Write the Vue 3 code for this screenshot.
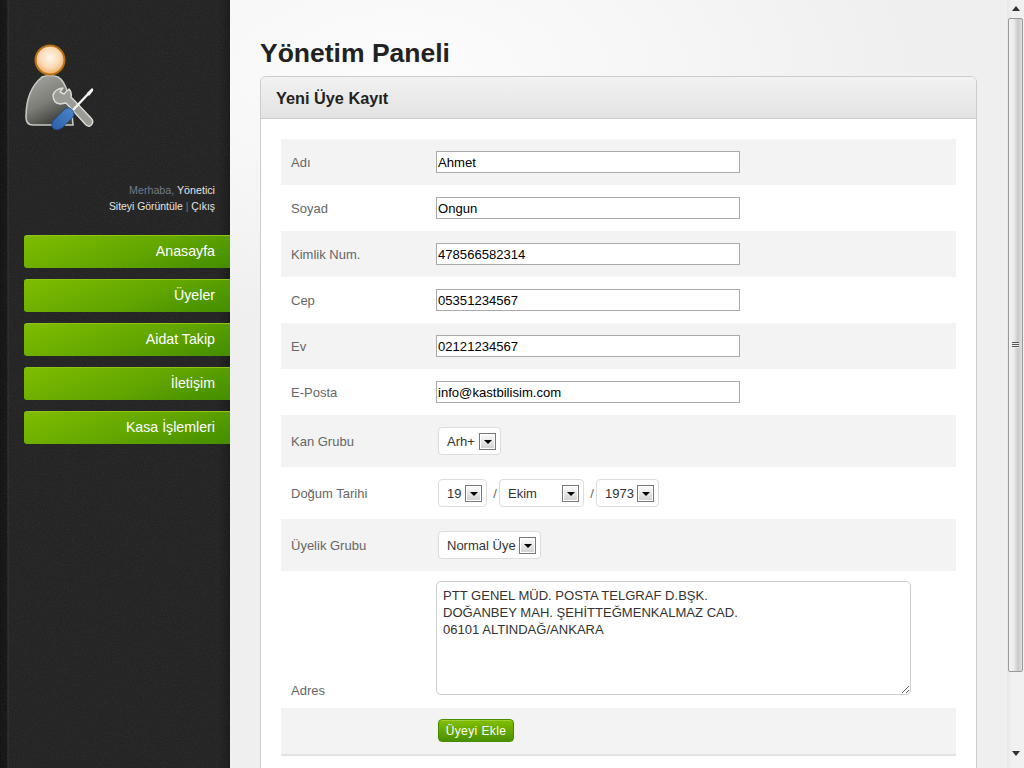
<script setup>
const textRows = [
  { label: 'Adı', value: 'Ahmet' },
  { label: 'Soyad', value: 'Ongun' },
  { label: 'Kimlik Num.', value: '478566582314' },
  { label: 'Cep', value: '05351234567' },
  { label: 'Ev', value: '02121234567' },
  { label: 'E-Posta', value: 'info@kastbilisim.com' },
]
const menu = ['Anasayfa', 'Üyeler', 'Aidat Takip', 'İletişim', 'Kasa İşlemleri']
const address = 'PTT GENEL MÜD. POSTA TELGRAF D.BŞK.\nDOĞANBEY MAH. ŞEHİTTEĞMENKALMAZ CAD.\n06101 ALTINDAĞ/ANKARA'
</script>

<template>
  <div class="page">
    <aside class="sidebar">
      <svg class="noise" width="230" height="768" aria-hidden="true">
        <filter id="grain"><feTurbulence type="fractalNoise" baseFrequency="0.9" numOctaves="2" seed="4" /><feColorMatrix type="matrix" values="0 0 0 0 1  0 0 0 0 1  0 0 0 0 1  0.5 0.5 0 0 -0.42" /></filter>
        <rect width="230" height="768" filter="url(#grain)" />
      </svg>
      <div class="side-inner">
        <svg class="avatar" width="75" height="90" viewBox="22 43 75 90">
          <defs>
            <radialGradient id="head" cx="50%" cy="42%" r="55%">
              <stop offset="0" stop-color="#fff6ec" /><stop offset=".6" stop-color="#fbdcb8" /><stop offset="1" stop-color="#f0b070" />
            </radialGradient>
            <linearGradient id="body" x1="0" y1="0" x2=".5" y2="1">
              <stop offset="0" stop-color="#aaaaa5" /><stop offset=".6" stop-color="#7c7d75" /><stop offset="1" stop-color="#3e403c" />
            </linearGradient>
            <linearGradient id="blue" x1="0" y1="1" x2="1" y2="0">
              <stop offset="0" stop-color="#2a5fa8" /><stop offset="1" stop-color="#4c86c9" />
            </linearGradient>
          </defs>
          <path d="M42 77 Q50 74 58 77 Q70 84 73 125 H33 Q26 125 26 117 Q26 90 42 77 Z" fill="url(#body)" stroke="#c6c8c2" stroke-width="1.6" />
          <circle cx="50" cy="60" r="14.5" fill="url(#head)" stroke="#b56f10" stroke-width="2" />
          <path d="M63 88 Q55 89 53 95 Q53 103 60 104 L66 103 L86 125 Q90 128 92 124 Q94 121 91 118 L71 97 Q72 92 69 89 L64 94 L60 92 Z" fill="#9a9c96" stroke="#dcdcd8" stroke-width="1.4" stroke-linejoin="round" />
          <path d="M89 93 L73 110" stroke="#f4f4f2" stroke-width="2.400" />
          <path d="M87 93 L92 88 Q94 89 93 91 L89 96 Z" fill="#f4f4f2" />
          <path d="M70 108 Q76 112 73 117 L62 128 Q57 131 54 129 Q50 126 53 121 L64 110 Q67 107 70 108 Z" fill="url(#blue)" stroke="#1e4b8c" stroke-width=".8" />
        </svg>
        <p class="hello"><span class="dim">Merhaba,</span> Yönetici</p>
        <p class="links">Siteyi Görüntüle <span class="dim">|</span> Çıkış</p>
        <nav class="menu">
          <a v-for="item in menu" :key="item" class="menu-item">{{ item }}</a>
        </nav>
      </div>
    </aside>

    <main class="main">
      <h1>Yönetim Paneli</h1>
      <section class="panel">
        <h2>Yeni Üye Kayıt</h2>
        <form class="form" @submit.prevent>
          <div v-for="row in textRows" :key="row.label" class="row">
            <label class="label">{{ row.label }}</label>
            <input class="text" type="text" :value="row.value" />
          </div>
          <div class="row tall">
            <label class="label">Kan Grubu</label>
            <div class="selects">
              <div class="select s-kan"><span>Arh+</span><i class="arrow" /></div>
            </div>
          </div>
          <div class="row tall">
            <label class="label">Doğum Tarihi</label>
            <div class="selects">
              <div class="select s-day"><span>19</span><i class="arrow" /></div>
              <span class="slash">/</span>
              <div class="select s-month"><span>Ekim</span><i class="arrow" /></div>
              <span class="slash">/</span>
              <div class="select s-year"><span>1973</span><i class="arrow" /></div>
            </div>
          </div>
          <div class="row tall">
            <label class="label">Üyelik Grubu</label>
            <div class="selects">
              <div class="select s-group"><span>Normal Üye</span><i class="arrow" /></div>
            </div>
          </div>
          <div class="row address">
            <label class="label">Adres</label>
            <textarea class="area" :value="address" />
          </div>
          <div class="row actions">
            <span class="label" />
            <button class="submit" type="submit">Üyeyi Ekle</button>
          </div>
        </form>
      </section>
    </main>

    <div class="scrollbar">
      <i class="up" />
      <div class="thumb"><i class="grip" /></div>
      <i class="down" />
    </div>
  </div>
</template>

<style>
html, body { margin: 0; overflow: hidden; }
</style>

<style scoped>
* { box-sizing: border-box; }
.page {
  display: flex; width: 1024px; height: 768px; overflow: hidden;
  font-family: "Liberation Sans", Arial, sans-serif; font-size: 13px;
}
.sidebar {
  position: relative; flex: 0 0 230px; height: 768px;
  background: linear-gradient(90deg, #141414 0, #171717 7px, #333 8px, #242424 9px, #242424 218px, #1b1b1b 230px);
}
.noise { position: absolute; left: 0; top: 0; opacity: .14; }
.side-inner { position: relative; padding: 43px 0 0 24px; }
.avatar { display: block; margin-left: -2px; }
.hello, .links { margin: 0; padding-right: 15px; text-align: right; font-size: 10.700px; line-height: 16px; color: #e4e4e4; }
.links { font-size: 10.400px; padding-top: 1px; }
.hello { margin-top: 49px; }
.dim { color: #6f7b8c; }
.menu { display: flex; flex-direction: column; gap: 11px; margin-top: 20px; }
.menu-item {
  display: block; height: 33px; padding-right: 15px; text-align: right;
  font-size: 14.200px; line-height: 31px; color: #fff;
  border-radius: 3px 0 0 3px; border-top: 1px solid #8fc410;
  background: linear-gradient(160deg, #7fbd00 0%, #62a600 55%, #438d00 100%);
}
.main {
  flex: 1; min-width: 0; height: 768px; padding: 0 30px;
  background: radial-gradient(ellipse 520px 260px at 170px 70px, #fcfcfc 0, #f7f7f7 45%, #efefef 100%) #efefef;
}
h1 { margin: 0; padding-top: 38px; height: 76px; font-size: 26.500px; line-height: 30px; font-weight: 700; color: #222; }
.panel { height: 720px; background: #fff; border: 1px solid #ccc; border-radius: 6px 6px 0 0; }
h2 {
  margin: 0; height: 42px; padding-left: 15px; font-size: 16.300px; line-height: 42px; font-weight: 700; color: #222;
  border-bottom: 1px solid #ccc; border-radius: 5px 5px 0 0;
  background: linear-gradient(#f2f2f2, #e3e3e3);
}
.form { padding: 20px 20px 0; }
.row { display: flex; align-items: center; height: 46px; color: #666; }
.row:nth-child(odd) { background: #f3f3f3; }
.tall { height: 52px; }
.label { flex: 0 0 155px; padding-left: 10px; }
.text {
  width: 304px; height: 22px; padding: 1px 1px 0; margin: 0; border: 1px solid #aaa; border-radius: 0;
  background: #fff; color: #000; font: 13.100px "Liberation Sans", Arial, sans-serif; outline: none;
}
.selects { display: flex; align-items: center; margin-left: 2px; }
.select {
  display: flex; align-items: center; justify-content: space-between; height: 28px; padding: 0 4px 0 8px;
  background: #fff; border: 1px solid #ddd; border-radius: 4px; color: #333;
}
.s-kan { width: 63px; }
.s-day { width: 49px; }
.s-month { width: 85px; }
.s-year { width: 63px; }
.s-group { width: 103px; }
.slash { width: 12px; padding-left: 4px; text-align: center; color: #666; }
.arrow {
  position: relative; flex: none; width: 17px; height: 17px; border: 1px solid #777;
  background: linear-gradient(#fdfdfd, #d0d0d0); box-shadow: inset 0 0 0 1px #fff;
}
.arrow::after {
  content: ""; position: absolute; left: 4px; top: 6px;
  border: 4px solid transparent; border-top-color: #000; border-bottom: 0;
}
.address { height: 137px; align-items: stretch; }
.address .label { align-self: flex-end; line-height: 14px; padding-bottom: 10px; }
.area {
  width: 475px; height: 114px; margin: 10px 0 0; padding: 5px 6px; border: 1px solid #ccc; border-radius: 5px;
  background: #fff; color: #333; font: 13.050px/17px "Liberation Sans", Arial, sans-serif; outline: none; resize: both;
}
.actions { height: 48px; padding-bottom: 1px; border-bottom: 2px solid #e3e3e3; }
.submit {
  margin-left: 2px; width: 76px; height: 23px; padding: 1px 0 0; border: 1px solid #478c00; border-radius: 4px;
  background: linear-gradient(#83bf00, #4a9000); color: #fff;
  font: 12px "Liberation Sans", Arial, sans-serif; letter-spacing: .4px; box-shadow: inset 0 1px 0 #9ccf30;
}
.scrollbar {
  position: relative; display: flex; flex-direction: column; align-items: center; flex: 0 0 17px; height: 768px;
  background: linear-gradient(90deg, #e8e8e8, #f1f1f1 30%, #f1f1f1);
}
.up, .down { flex: none; width: 0; height: 0; border: 4px solid transparent; }
.up { margin-top: 6px; border-top: 0; border-bottom: 5px solid #333; }
.thumb {
  display: flex; align-items: center; justify-content: center;
  width: 15px; height: 654px; margin-top: 7px; flex: none; border: 1px solid #999; border-radius: 2px;
  background: linear-gradient(90deg, #f2f2f2 0, #ececec 35%, #c9c9cd 70%, #e0e0e2 100%);
}
.grip { width: 7px; height: 6px; background: repeating-linear-gradient(#555 0 1px, #eee 1px 2px); }
.down { margin-top: 79px; border-bottom: 0; border-top: 5px solid #333; }
</style>
